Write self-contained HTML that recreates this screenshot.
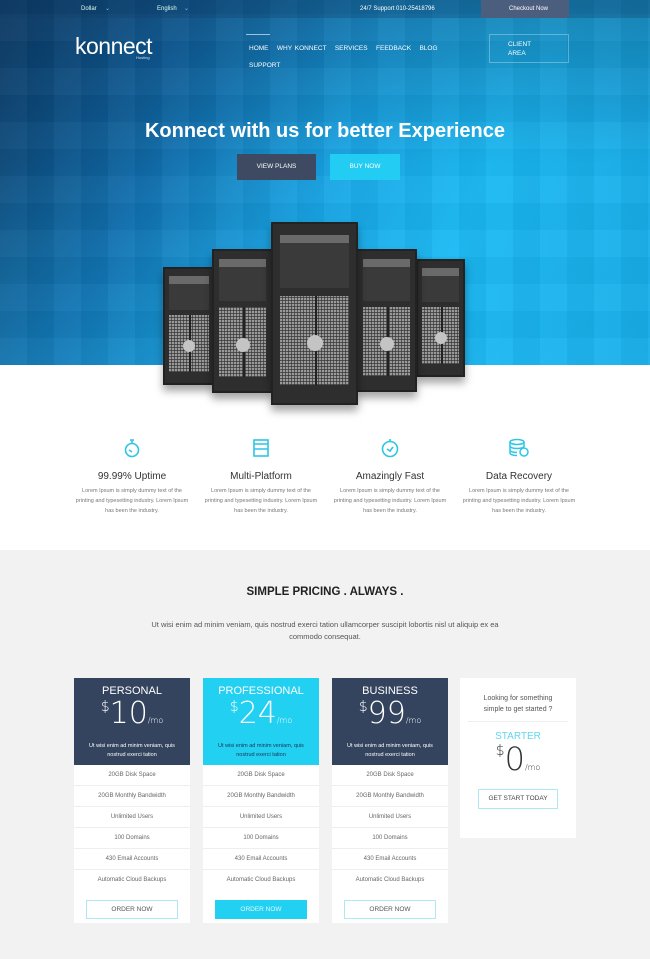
<!DOCTYPE html>
<html><head><meta charset="utf-8"><style>
*{margin:0;padding:0;box-sizing:border-box}
body{width:650px;height:959px;overflow:hidden;font-family:"Liberation Sans",sans-serif;background:#f2f2f2;position:relative}
.hero{position:absolute;left:0;top:0;width:650px;height:365px;background:
linear-gradient(180deg,rgba(8,40,80,.35) 0%,rgba(0,0,0,0) 45%,rgba(30,190,250,.25) 100%),
linear-gradient(110deg,#0a3d68 0%,#0f68a6 25%,#18a4e4 50%,#1ab8f3 70%,#18aae6 100%);overflow:hidden}
.hero:after{content:"";position:absolute;inset:0;background:
repeating-linear-gradient(90deg,rgba(255,255,255,.025) 0 27px,rgba(0,0,0,.03) 27px 54px),
repeating-linear-gradient(0deg,rgba(255,255,255,.025) 0 27px,rgba(0,0,0,.025) 27px 54px)}
.topbar{position:absolute;left:0;top:0;width:650px;height:18px;background:rgba(20,60,100,.3);z-index:2;font-size:6px;color:#dfe;line-height:18px}
.t{position:absolute;color:#fff;z-index:3}
.white{position:absolute;left:0;top:365px;width:650px;height:185px;background:#fff}
.srv{position:absolute;background:#2e2e2e;border:2px solid #222;z-index:4;box-shadow:0 6px 8px rgba(0,0,0,.35)}
.srv .win{position:absolute;left:8%;right:8%;top:6%;height:30%;background:#3a3a3a;border-top:8px solid #6a6a6a}
.srv .grill{position:absolute;left:8%;right:8%;top:40%;bottom:10%;background:
repeating-linear-gradient(90deg,#999 0 2px,#555 2px 3px)}
.srv .grill:before{content:"";position:absolute;inset:0;background:repeating-linear-gradient(0deg,rgba(50,50,50,.7) 0 1px,transparent 1px 3px)}
.srv .grill:after{content:"";position:absolute;left:50%;top:0;bottom:0;width:2px;background:#222}
.srv .c{position:absolute;left:50%;top:62%;width:16px;height:16px;margin-left:-8px;border-radius:50%;background:#c4c4c4;z-index:2}
.feat{position:absolute;top:438px;width:120px;text-align:center}
.feat h4{font-weight:normal;font-size:10px;color:#333;margin-top:8px}
.feat p{font-size:5.5px;color:#777;line-height:10px;margin-top:4px;padding:0 3px}
.card{position:absolute;top:678px;width:116px;height:245px;background:#fff}
.card .hd{height:87px;background:#34435e;color:#fff;text-align:center;padding-top:7px}
.card.pro .hd{background:#22d0f2}
.hd .n{font-size:11px}
.hd .p{font-size:30px;font-weight:300;line-height:32px;margin-top:1px;font-family:"DejaVu Sans","Liberation Sans",sans-serif;font-weight:200}
.hd .p sup{font-size:14px;vertical-align:top;line-height:18px}
.hd .p small{font-size:8px}
.hd .d{font-size:5.5px;line-height:9px;padding:0 8px;margin-top:5px}
.card .r{height:21px;border-bottom:1px solid #eee;font-size:6px;color:#666;text-align:center;line-height:21px}
.btn{margin:9px auto 0;width:92px;height:19px;border:1px solid #aee8f3;font-size:6.5px;color:#555;text-align:center;line-height:17px}
.pro .btn{background:#22d0f2;color:#e0f8ff;border-color:#22d0f2}
</style></head><body>
<div class="hero"></div>
<div class="topbar">
<span style="position:absolute;left:81px">Dollar</span><span style="position:absolute;left:105px;color:#6cf">⌄</span>
<span style="position:absolute;left:157px">English</span><span style="position:absolute;left:184px;color:#6cf">⌄</span>
<span style="position:absolute;left:360px;color:#fff">24/7 Support 010-25418796</span>
<div style="position:absolute;left:481px;top:0;width:88px;height:18px;background:#4c5e7e;color:#fff;padding-left:28px">Checkout Now</div>
</div>
<div class="t" style="left:75px;top:33px;font-size:23px;letter-spacing:-.5px;font-weight:300">konnect</div>
<div class="t" style="left:136px;top:55px;font-size:4px;opacity:.8">Hosting</div>
<div class="t" style="left:246px;top:34px;width:24px;height:1px;background:rgba(255,255,255,.6)"></div>
<div class="t" style="left:249px;top:40px;font-size:6.5px;word-spacing:1px;width:200px;line-height:17px">HOME &nbsp; WHY KONNECT &nbsp; SERVICES &nbsp; FEEDBACK &nbsp; BLOG<br>SUPPORT</div>
<div class="t" style="left:489px;top:34px;width:80px;height:29px;border:1px solid rgba(255,255,255,.3);font-size:6.5px;padding:5px 0 0 18px;line-height:9px">CLIENT<br>AREA</div>
<div class="t" style="left:0;width:650px;top:120px;text-align:center;font-size:20px;font-weight:bold">Konnect with us for better Experience</div>
<div class="t" style="left:237px;top:154px;width:79px;height:26px;background:#3d4a62;font-size:6.5px;text-align:center;line-height:26px">VIEW PLANS</div>
<div class="t" style="left:330px;top:154px;width:70px;height:26px;background:#22ccf2;font-size:6.5px;text-align:center;line-height:26px">BUY NOW</div>
<div class="white"></div>
<div class="srv" style="left:163px;top:267px;width:52px;height:118px"><div class="win"></div><div class="grill"></div><div class="c" style="width:12px;height:12px;margin-left:-6px"></div></div>
<div class="srv" style="left:416px;top:259px;width:49px;height:118px"><div class="win"></div><div class="grill"></div><div class="c" style="width:12px;height:12px;margin-left:-6px"></div></div>
<div class="srv" style="left:212px;top:249px;width:61px;height:144px"><div class="win"></div><div class="grill"></div><div class="c" style="width:14px;height:14px;margin-left:-7px"></div></div>
<div class="srv" style="left:356px;top:249px;width:61px;height:143px"><div class="win"></div><div class="grill"></div><div class="c" style="width:14px;height:14px;margin-left:-7px"></div></div>
<div class="srv" style="left:271px;top:222px;width:87px;height:183px"><div class="win"></div><div class="grill"></div><div class="c"></div></div>

<div class="feat" style="left:72px"><svg width="18" height="20" viewBox="0 0 18 20" fill="none" stroke="#2cc6e6" stroke-width="1.6"><circle cx="9" cy="12" r="6.5"/><path d="M7 2h4M9 2v3M6 12l3 2"/></svg><h4>99.99% Uptime</h4><p>Lorem Ipsum is simply dummy text of the printing and typesetting industry. Lorem Ipsum has been the industry.</p></div>
<div class="feat" style="left:201px"><svg width="18" height="20" viewBox="0 0 18 20" fill="none" stroke="#2cc6e6" stroke-width="1.6"><rect x="2" y="2" width="14" height="16"/><path d="M2 6h14M2 11h14" /></svg><h4>Multi-Platform</h4><p>Lorem Ipsum is simply dummy text of the printing and typesetting industry. Lorem Ipsum has been the industry.</p></div>
<div class="feat" style="left:330px"><svg width="20" height="20" viewBox="0 0 20 20" fill="none" stroke="#2cc6e6" stroke-width="1.6"><circle cx="10" cy="11" r="7.5"/><path d="M7 11l3 2 3-4M10 1v2"/></svg><h4>Amazingly Fast</h4><p>Lorem Ipsum is simply dummy text of the printing and typesetting industry. Lorem Ipsum has been the industry.</p></div>
<div class="feat" style="left:459px"><svg width="22" height="20" viewBox="0 0 22 20" fill="none" stroke="#2cc6e6" stroke-width="1.5"><ellipse cx="9" cy="4" rx="7" ry="2.5"/><path d="M2 4v11c0 1.4 3 2.5 7 2.5M16 4v5M2 8c0 1.4 3 2.5 7 2.5s7-1 7-2.5M2 12c0 1.4 3 2.5 7 2.5"/><circle cx="16" cy="14" r="4"/></svg><h4>Data Recovery</h4><p>Lorem Ipsum is simply dummy text of the printing and typesetting industry. Lorem Ipsum has been the industry.</p></div>

<div style="position:absolute;left:0;width:650px;top:586px;text-align:center;font-size:11.5px;font-weight:bold;color:#222">SIMPLE PRICING . ALWAYS .</div>
<div style="position:absolute;left:140px;width:370px;top:619px;text-align:center;font-size:7.5px;line-height:12px;color:#555">Ut wisi enim ad minim veniam, quis nostrud exerci tation ullamcorper suscipit lobortis nisl ut aliquip ex ea commodo consequat.</div>

<div class="card" style="left:74px"><div class="hd"><div class="n">PERSONAL</div><div class="p"><sup>$</sup>10<small>/mo</small></div><div class="d">Ut wisi enim ad minim veniam, quis nostrud exerci tation</div></div>
<div class="r">20GB Disk Space</div><div class="r">20GB Monthly Bandwidth</div><div class="r">Unlimited Users</div><div class="r">100 Domains</div><div class="r">430 Email Accounts</div><div class="r" style="border:0">Automatic Cloud Backups</div><div class="btn">ORDER NOW</div></div>
<div class="card pro" style="left:203px"><div class="hd"><div class="n">PROFESSIONAL</div><div class="p"><sup>$</sup>24<small>/mo</small></div><div class="d" style="color:#1a3550">Ut wisi enim ad minim veniam, quis nostrud exerci tation</div></div>
<div class="r">20GB Disk Space</div><div class="r">20GB Monthly Bandwidth</div><div class="r">Unlimited Users</div><div class="r">100 Domains</div><div class="r">430 Email Accounts</div><div class="r" style="border:0">Automatic Cloud Backups</div><div class="btn">ORDER NOW</div></div>
<div class="card" style="left:332px"><div class="hd"><div class="n">BUSINESS</div><div class="p"><sup>$</sup>99<small>/mo</small></div><div class="d">Ut wisi enim ad minim veniam, quis nostrud exerci tation</div></div>
<div class="r">20GB Disk Space</div><div class="r">20GB Monthly Bandwidth</div><div class="r">Unlimited Users</div><div class="r">100 Domains</div><div class="r">430 Email Accounts</div><div class="r" style="border:0">Automatic Cloud Backups</div><div class="btn">ORDER NOW</div></div>
<div style="position:absolute;left:460px;top:678px;width:116px;height:160px;background:#fff;text-align:center">
<div style="font-size:7px;color:#555;line-height:11px;margin-top:15px">Looking for something<br>simple to get started ?</div>
<div style="width:100px;margin:6px auto 0;border-top:1px solid #eee"></div>
<div style="font-size:10px;color:#5fd6ee;margin-top:9px">STARTER</div>
<div style="font-size:32px;font-weight:200;color:#333;line-height:34px;font-family:'DejaVu Sans',sans-serif"><sup style="font-size:14px;vertical-align:top;line-height:18px">$</sup>0<small style="font-size:8px">/mo</small></div>
<div style="width:80px;height:20px;margin:4px auto 0;border:1px solid #aee8f3;font-size:6.5px;color:#444;line-height:18px">GET START TODAY</div>
</div>
</body></html>
